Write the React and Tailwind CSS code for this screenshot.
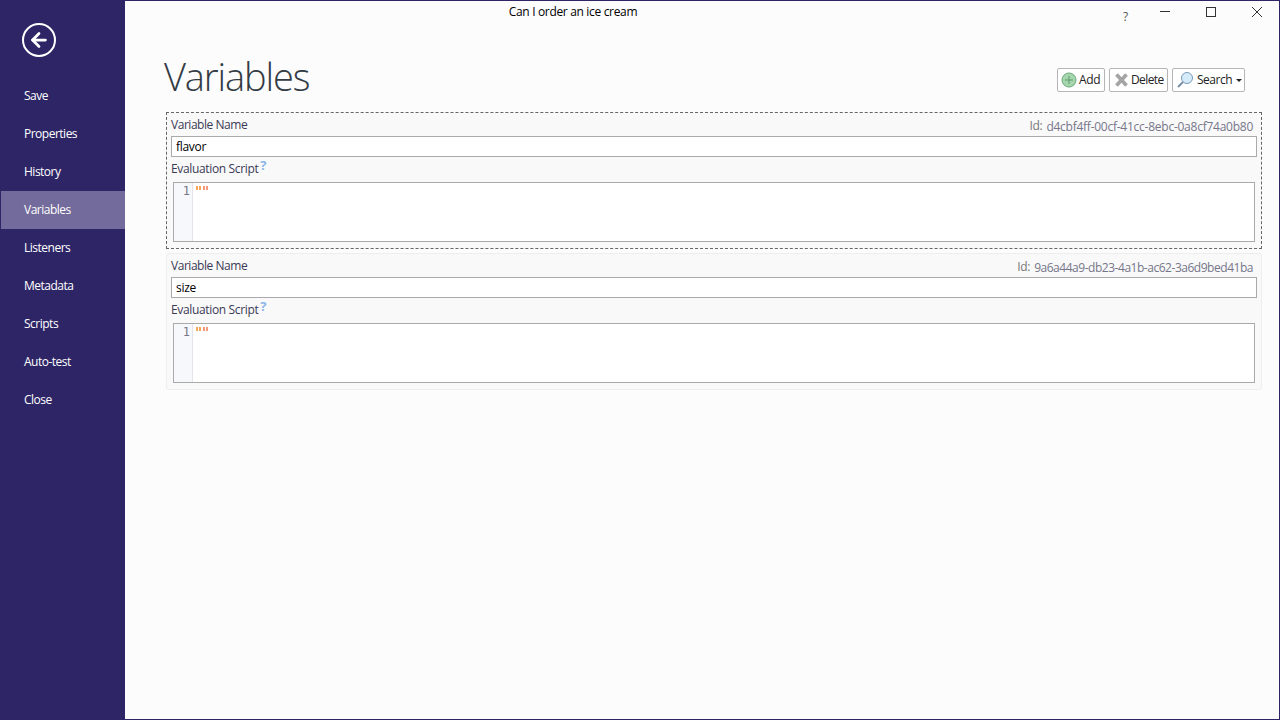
import { ArrowLeft } from 'lucide-react';

const NAV = ['Save', 'Properties', 'History', 'Variables', 'Listeners', 'Metadata', 'Scripts', 'Auto-test', 'Close'];

const VARIABLES = [
  { name: 'flavor', id: 'd4cbf4ff-00cf-41cc-8ebc-0a8cf74a0b80', selected: true, idTracking: 'tracking-[-0.25px]' },
  { name: 'size', id: '9a6a44a9-db23-4a1b-ac62-3a6d9bed41ba', selected: false, idTracking: 'tracking-[-0.47px]' },
];

function VariableCard({ variable }) {
  return (
    <div
      className={`h-[137px] px-1 pt-[2px] bg-[#f9f9f9] ${
        variable.selected
          ? 'border border-dashed border-[#666666]'
          : 'border border-[#eeeeee] rounded-[3px]'
      }`}
    >
      <div className="flex items-center justify-between h-[21px] pr-[4px]">
        <span className="text-[#3a3a55] tracking-[-0.46px] -mt-[2px]">Variable Name</span>
        <span className="flex items-center gap-[4px] mt-[3px]">
          <span className="text-[#777777] -mt-[3px] tracking-[-0.3px]">Id:</span>
          <span className={`text-[#76768a] ${variable.idTracking}`}>{variable.id}</span>
        </span>
      </div>
      <div className="h-[21px] bg-white border border-[#aaaaaa] px-1 leading-[19px] text-black tracking-[-0.3px]">
        {variable.name}
      </div>
      <div className="flex h-[25px] items-center text-[#3a3a55] tracking-[-0.35px] pb-[2px]">
        Evaluation Script
        <span className="text-[#8ab6e8] font-bold text-[13px] ml-[2px] -mt-[5px]">?</span>
      </div>
      <div className="mx-[2px] h-[60px] flex bg-white border border-[#aaaaaa]">
        <div className="w-[19px] bg-[#f7f8fc] border-r border-[#e4e4ea] text-right pr-[2px] text-[#777788] leading-[14px] pt-[1px] font-['DejaVu_Sans_Mono',monospace]">
          1
        </div>
        <div className="flex gap-[2px] pl-[3px] pt-[3px]">
          <span className="flex gap-[1px] h-[4px]">
            <span className="w-[2px] bg-[#f5a65b]" />
            <span className="w-[2px] bg-[#f5a65b]" />
          </span>
          <span className="flex gap-[1px] h-[4px]">
            <span className="w-[2px] bg-[#f29a7a]" />
            <span className="w-[2px] bg-[#f29a7a]" />
          </span>
        </div>
      </div>
    </div>
  );
}

function ToolButton({ icon, label, width, gap, tracking }) {
  return (
    <button className={`${width} ${gap} ${tracking} h-[24px] flex items-center pl-[3px] bg-white border border-[#b5b5b5] rounded-[2px] text-[#222222]`}>
      {icon}
      {label}
    </button>
  );
}

export default function App() {
  return (
    <div className="h-[720px] w-[1280px] flex overflow-hidden bg-[#fcfcfc] border border-[#2e2566] text-[12px] font-['Open_Sans',sans-serif]">
      <aside className="w-[124px] shrink-0 bg-[#2e2566] text-white tracking-[-0.5px]">
        <div className="h-[76px] pl-[21px] pt-[22px]">
          <div className="w-[34px] h-[34px] rounded-full border-2 border-white flex items-center justify-center">
            <ArrowLeft size={22} strokeWidth={3} />
          </div>
        </div>
        {NAV.map((item) => (
          <div
            key={item}
            className={`h-[38px] pl-[23px] flex items-center ${item === 'Variables' ? 'bg-[#736b9b]' : ''}`}
          >
            {item}
          </div>
        ))}
      </aside>

      <main className="flex-1 flex flex-col">
        <div className="flex h-[22px]">
          <div className="w-[896px] text-center text-black leading-[22px] tracking-[-0.33px]">Can I order an ice cream</div>
          <div className="flex-1 relative text-[#555555]">
            <span className="absolute left-[102px] top-[7px]">?</span>
            <svg className="absolute left-[138px] top-[5px]" width="12" height="12" viewBox="0 0 12 12">
              <path d="M1 5.5h10" stroke="#333" fill="none" />
            </svg>
            <svg className="absolute left-[184px] top-[5px]" width="12" height="12" viewBox="0 0 12 12">
              <rect x="1.5" y="1.5" width="9" height="9" stroke="#333" fill="none" />
            </svg>
            <svg className="absolute left-[230px] top-[5px]" width="12" height="12" viewBox="0 0 12 12">
              <path d="M1 1l10 10M11 1L1 11" stroke="#333" fill="none" />
            </svg>
          </div>
        </div>

        <div className="flex h-[89px] pl-[39px] pr-[34px]">
          <h1 className="text-[38px] font-light text-[#333b44] leading-[52px] mt-[27px] tracking-[-1.1px]">Variables</h1>
          <div className="ml-auto flex gap-[4px] mt-[45px] h-[24px]">
            <ToolButton
              width="w-[48px]"
              gap="gap-[2px]"
              tracking="tracking-[-0.4px]"
              label="Add"
              icon={
                <svg width="16" height="16" viewBox="0 0 16 16" className="shrink-0">
                  <circle cx="8" cy="8" r="7" fill="#a5d6ae" stroke="#6aa97a" />
                  <path d="M8 4v8M4 8h8" stroke="#5c9c6c" />
                </svg>
              }
            />
            <ToolButton
              width="w-[59px]"
              gap="gap-[1px]"
              tracking="tracking-[-0.6px]"
              label="Delete"
              icon={
                <svg width="17" height="16" viewBox="0 0 17 16" className="shrink-0">
                  <path d="M3.5 2.5l10 11M13.5 2.5l-10 11" stroke="#a5a5a5" strokeWidth="3.8" />
                </svg>
              }
            />
            <ToolButton
              width="w-[73px]"
              gap="gap-[3px]"
              tracking="tracking-[-0.5px]"
              label={
                <span className="flex items-center gap-[4px]">
                  Search
                  <span className="w-0 h-0 border-x-[3px] border-x-transparent border-t-[3px] border-t-[#222222]" />
                </span>
              }
              icon={
                <svg width="18" height="18" viewBox="0 0 18 18" className="shrink-0">
                  <circle cx="11" cy="7" r="5.5" fill="#d6ebfa" stroke="#7a9cb8" />
                  <path d="M7 11l-5 5" stroke="#7a8fa5" strokeWidth="2" />
                </svg>
              }
            />
          </div>
        </div>

        <div className="flex flex-col gap-[4px] pl-[41px] pr-[17px]">
          {VARIABLES.map((variable) => (
            <VariableCard key={variable.id} variable={variable} />
          ))}
        </div>
      </main>
    </div>
  );
}
